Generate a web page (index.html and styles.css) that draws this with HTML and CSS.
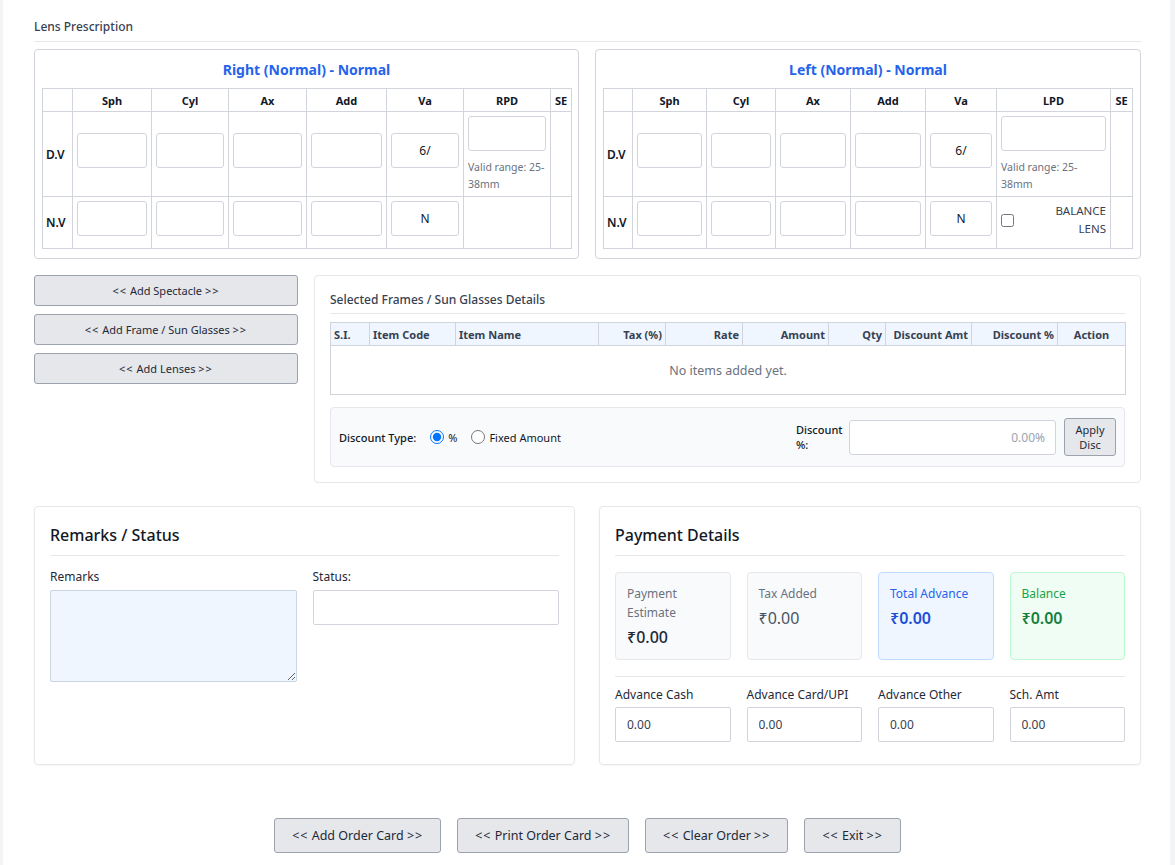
FILE: index.html
```html
<!DOCTYPE html>
<html>
<head>
<meta charset="utf-8">
<link rel="stylesheet" href="styles.css">
</head>
<body>
<div class="page">
  <div class="section-label">Lens Prescription</div>

  <div class="rx-grid">
    <div class="rx-card">
      <div class="rx-title">Right (Normal) - Normal</div>
      <table class="rx-table">
        <colgroup>
          <col style="width:30px"><col style="width:79px"><col style="width:77px"><col style="width:78px"><col style="width:80px"><col style="width:77px"><col style="width:87px"><col style="width:21px">
        </colgroup>
        <tr class="rx-head"><th></th><th>Sph</th><th>Cyl</th><th>Ax</th><th>Add</th><th>Va</th><th>RPD</th><th>SE</th></tr>
        <tr class="rx-dv">
          <td class="rx-lbl">D.V</td>
          <td><input class="rx-in" type="text"></td>
          <td><input class="rx-in" type="text"></td>
          <td><input class="rx-in" type="text"></td>
          <td><input class="rx-in" type="text"></td>
          <td><input class="rx-in center" type="text" value="6/"></td>
          <td class="pd"><input class="rx-in" type="text"><div class="hint">Valid range: 25-38mm</div></td>
          <td></td>
        </tr>
        <tr class="rx-nv">
          <td class="rx-lbl">N.V</td>
          <td><input class="rx-in" type="text"></td>
          <td><input class="rx-in" type="text"></td>
          <td><input class="rx-in" type="text"></td>
          <td><input class="rx-in" type="text"></td>
          <td><input class="rx-in center" type="text" value="N"></td>
          <td></td>
          <td></td>
        </tr>
      </table>
    </div>

    <div class="rx-card">
      <div class="rx-title">Left (Normal) - Normal</div>
      <table class="rx-table">
        <colgroup>
          <col style="width:29px"><col style="width:74px"><col style="width:69px"><col style="width:75px"><col style="width:75px"><col style="width:71px"><col style="width:114px"><col style="width:22px">
        </colgroup>
        <tr class="rx-head"><th></th><th>Sph</th><th>Cyl</th><th>Ax</th><th>Add</th><th>Va</th><th>LPD</th><th>SE</th></tr>
        <tr class="rx-dv">
          <td class="rx-lbl">D.V</td>
          <td><input class="rx-in" type="text"></td>
          <td><input class="rx-in" type="text"></td>
          <td><input class="rx-in" type="text"></td>
          <td><input class="rx-in" type="text"></td>
          <td><input class="rx-in center" type="text" value="6/"></td>
          <td class="pd"><input class="rx-in" type="text"><div class="hint">Valid range: 25-38mm</div></td>
          <td></td>
        </tr>
        <tr class="rx-nv">
          <td class="rx-lbl">N.V</td>
          <td><input class="rx-in" type="text"></td>
          <td><input class="rx-in" type="text"></td>
          <td><input class="rx-in" type="text"></td>
          <td><input class="rx-in" type="text"></td>
          <td><input class="rx-in center" type="text" value="N"></td>
          <td class="balance"><label class="balance-wrap"><input type="checkbox" class="chk"><span class="balance-text">BALANCE LENS</span></label></td>
          <td></td>
        </tr>
      </table>
    </div>
  </div>

  <div class="mid-grid">
    <div class="btn-col">
      <button class="side-btn"><span class="arr">&lt;&lt;</span> Add Spectacle <span class="arr">&gt;&gt;</span></button>
      <button class="side-btn"><span class="arr">&lt;&lt;</span> Add Frame / Sun Glasses <span class="arr">&gt;&gt;</span></button>
      <button class="side-btn"><span class="arr">&lt;&lt;</span> Add Lenses <span class="arr">&gt;&gt;</span></button>
    </div>

    <div class="frames-card">
      <div class="frames-title">Selected Frames / Sun Glasses Details</div>
      <table class="items-table">
        <colgroup>
          <col style="width:39px"><col style="width:86px"><col style="width:143px"><col style="width:67px"><col style="width:77px"><col style="width:86px"><col style="width:57px"><col style="width:86px"><col style="width:86px"><col style="width:68px">
        </colgroup>
        <tr>
          <th class="l">S.I.</th><th class="l">Item Code</th><th class="l">Item Name</th><th class="r">Tax (%)</th><th class="r">Rate</th><th class="r">Amount</th><th class="r">Qty</th><th class="r">Discount Amt</th><th class="r">Discount %</th><th class="c">Action</th>
        </tr>
        <tr><td colspan="10" class="empty">No items added yet.</td></tr>
      </table>

      <div class="disc-box">
        <div class="disc-type">
          <span class="disc-label">Discount Type:</span>
          <label class="radio"><input type="radio" name="dt" checked><span>%</span></label>
          <label class="radio"><input type="radio" name="dt"><span>Fixed Amount</span></label>
        </div>
        <div class="disc-right">
          <span class="disc-pct-label">Discount %:</span>
          <input class="disc-input" type="text" placeholder="0.00%">
          <button class="apply-btn">Apply Disc</button>
        </div>
      </div>
    </div>
  </div>

  <div class="bottom-grid">
    <div class="card">
      <div class="card-title">Remarks / Status</div>
      <div class="remarks-grid">
        <div class="field">
          <label class="field-label">Remarks</label>
          <textarea class="remarks-area"></textarea>
        </div>
        <div class="field">
          <label class="field-label">Status:</label>
          <input class="text-in" type="text">
        </div>
      </div>
    </div>

    <div class="card">
      <div class="card-title">Payment Details</div>
      <div class="sum-grid">
        <div class="sum-box grey">
          <div class="sum-label">Payment Estimate</div>
          <div class="sum-value strong">₹0.00</div>
        </div>
        <div class="sum-box grey">
          <div class="sum-label">Tax Added</div>
          <div class="sum-value">₹0.00</div>
        </div>
        <div class="sum-box blue">
          <div class="sum-label">Total Advance</div>
          <div class="sum-value">₹0.00</div>
        </div>
        <div class="sum-box green">
          <div class="sum-label">Balance</div>
          <div class="sum-value">₹0.00</div>
        </div>
      </div>
      <div class="adv-grid">
        <div class="field">
          <label class="field-label">Advance Cash</label>
          <input class="text-in amt" type="text" value="0.00">
        </div>
        <div class="field">
          <label class="field-label">Advance Card/UPI</label>
          <input class="text-in amt" type="text" value="0.00">
        </div>
        <div class="field">
          <label class="field-label">Advance Other</label>
          <input class="text-in amt" type="text" value="0.00">
        </div>
        <div class="field">
          <label class="field-label">Sch. Amt</label>
          <input class="text-in amt" type="text" value="0.00">
        </div>
      </div>
    </div>
  </div>

  <div class="actions">
    <button class="action-btn"><span class="arr">&lt;&lt;</span> Add Order Card <span class="arr">&gt;&gt;</span></button>
    <button class="action-btn"><span class="arr">&lt;&lt;</span> Print Order Card <span class="arr">&gt;&gt;</span></button>
    <button class="action-btn"><span class="arr">&lt;&lt;</span> Clear Order <span class="arr">&gt;&gt;</span></button>
    <button class="action-btn"><span class="arr">&lt;&lt;</span> Exit <span class="arr">&gt;&gt;</span></button>
  </div>
</div>
</body>
</html>
```

FILE: styles.css
```css
* { box-sizing: border-box; }

html, body {
  margin: 0;
  padding: 0;
}

body {
  background: #f3f4f6;
  font-family: "Noto Sans", "Open Sans", sans-serif;
  color: #1f2937;
  font-size: 12px;
}

.page {
  background: #ffffff;
  margin-left: 3px;
  width: 1167px;
  min-height: 865px;
  padding: 17px 29px 12px 31px;
}

.section-label {
  font-size: 12px;
  font-weight: 500;
  color: #374151;
  line-height: 20px;
  padding-bottom: 4px;
  border-bottom: 1px solid #e5e7eb;
  margin-bottom: 7px;
}

.arr {
  letter-spacing: 1px;
}

/* prescription */
.rx-grid {
  display: grid;
  grid-template-columns: 545px 546px;
  gap: 16px;
}

.rx-card {
  border: 1px solid #d1d5db;
  border-radius: 4px;
  padding: 7px 7px 9px;
}

.rx-title {
  text-align: center;
  color: #2563eb;
  font-weight: 700;
  font-size: 14px;
  line-height: 22px;
  margin-top: 2px;
  margin-bottom: 7px;
}

.rx-table {
  width: 100%;
  border-collapse: collapse;
  table-layout: fixed;
}

.rx-table th,
.rx-table td {
  border: 1px solid #d1d5db;
  padding: 4px;
  vertical-align: middle;
}

.rx-table th {
  font-size: 11px;
  font-weight: 700;
  color: #111827;
  text-align: center;
  height: 23px;
  padding: 0 2px;
}

.rx-lbl {
  font-size: 12px;
  font-weight: 600;
  color: #111827;
  padding: 4px 3px !important;
}

.rx-in {
  display: block;
  width: 100%;
  height: 35px;
  border: 1px solid #d1d5db;
  border-radius: 3px;
  background: #ffffff;
  font-family: inherit;
  font-size: 12px;
  color: #111827;
  padding: 0 6px;
  margin-bottom: 8px;
  outline: none;
}

.rx-in.center { text-align: center; }

.pd { vertical-align: top !important; }

.hint {
  font-size: 10.5px;
  line-height: 16.5px;
  color: #6b7280;
  margin-top: 0;
}

.balance { vertical-align: top !important; padding-top: 5px !important; }

.balance-wrap {
  display: flex;
  align-items: center;
  justify-content: space-between;
}

.chk {
  width: 13px;
  height: 13px;
  margin: 0;
}

.balance-text {
  width: 70px;
  text-align: right;
  font-size: 11.5px;
  line-height: 18px;
  color: #374151;
}

/* middle */
.mid-grid {
  display: grid;
  grid-template-columns: 264px 827px;
  gap: 16px;
  margin-top: 16px;
  align-items: start;
}

.btn-col {
  display: flex;
  flex-direction: column;
  gap: 8px;
}

.side-btn {
  height: 31px;
  background: #e5e7eb;
  border: 1px solid #9ca3af;
  border-radius: 3px;
  font-family: inherit;
  font-size: 11px;
  color: #1f2937;
}

.frames-card {
  border: 1px solid #e5e7eb;
  border-radius: 4px;
  padding: 15px;
}

.frames-title {
  font-size: 12px;
  font-weight: 500;
  color: #374151;
  line-height: 18px;
  padding-bottom: 4px;
  border-bottom: 1px solid #e5e7eb;
  margin-bottom: 8px;
}

.items-table {
  width: 100%;
  border-collapse: collapse;
  table-layout: fixed;
  border: 1px solid #d1d5db;
}

.items-table th {
  background: #eff6ff;
  border: 1px solid #d1d5db;
  height: 23px;
  font-size: 11px;
  font-weight: 700;
  color: #374151;
  padding: 0 3px;
  white-space: nowrap;
}

.items-table th.l { text-align: left; }
.items-table th.r { text-align: right; }
.items-table th.c { text-align: center; }

.empty {
  height: 49px;
  text-align: center;
  color: #6b7280;
  font-size: 12.5px;
}

.disc-box {
  margin-top: 12px;
  height: 60px;
  background: #f8fafc;
  border: 1px solid #e5e7eb;
  border-radius: 4px;
  display: flex;
  align-items: center;
  justify-content: space-between;
  padding: 0 8px;
}

.disc-type {
  display: flex;
  align-items: center;
  font-size: 11px;
  color: #111827;
}

.disc-label {
  font-weight: 500;
  margin-right: 14px;
}

.radio {
  display: flex;
  align-items: center;
  margin-right: 14px;
}

.radio input {
  width: 14px;
  height: 14px;
  margin: 0 4px 0 0;
}

.disc-right {
  display: flex;
  align-items: center;
}

.disc-pct-label {
  width: 48px;
  font-size: 11px;
  font-weight: 500;
  line-height: 15px;
  color: #111827;
  margin-right: 5px;
}

.disc-input {
  width: 207px;
  height: 35px;
  border: 1px solid #d1d5db;
  border-radius: 3px;
  text-align: right;
  padding: 0 10px;
  font-family: inherit;
  font-size: 12px;
  outline: none;
}

.disc-input::placeholder { color: #9ca3af; }

.apply-btn {
  width: 52px;
  height: 38px;
  margin-left: 8px;
  background: #e5e7eb;
  border: 1px solid #9ca3af;
  border-radius: 3px;
  font-family: inherit;
  font-size: 11px;
  line-height: 15px;
  color: #1f2937;
  padding: 0 4px;
}

/* bottom */
.bottom-grid {
  display: grid;
  grid-template-columns: 541px 542px;
  gap: 24px;
  margin-top: 23px;
}

.card {
  border: 1px solid #e5e7eb;
  border-radius: 4px;
  padding: 15px 15px 22px;
  box-shadow: 0 1px 2px rgba(0,0,0,0.04);
}

.card-title {
  font-size: 16px;
  font-weight: 500;
  color: #111827;
  line-height: 26px;
  padding-bottom: 7px;
  border-bottom: 1px solid #e5e7eb;
  margin-bottom: 12px;
}

.remarks-grid {
  display: grid;
  grid-template-columns: 1fr 1fr;
  gap: 16px;
  align-items: start;
}

.field {
  display: flex;
  flex-direction: column;
}

.field-label {
  font-size: 12px;
  line-height: 17px;
  color: #1f2937;
  margin-bottom: 5px;
}

.remarks-area {
  height: 92px;
  background: #eff6ff;
  border: 1px solid #cbd5e1;
  border-radius: 2px;
  resize: both;
  font-family: inherit;
  outline: none;
}

.text-in {
  height: 35px;
  border: 1px solid #d1d5db;
  border-radius: 2px;
  background: #ffffff;
  font-family: inherit;
  font-size: 12px;
  color: #374151;
  padding: 0 11px;
  outline: none;
  width: 100%;
}

.sum-grid {
  display: grid;
  grid-template-columns: repeat(4, 1fr);
  gap: 16px;
  margin-top: 16px;
  padding-bottom: 16px;
  border-bottom: 1px solid #e5e7eb;
}

.sum-box {
  height: 88px;
  border: 1px solid #e5e7eb;
  border-radius: 4px;
  padding: 11px 11px;
}

.sum-box.grey { background: #f8fafc; }
.sum-box.blue { background: #eff6ff; border-color: #bfdbfe; }
.sum-box.green { background: #f0fdf4; border-color: #bbf7d0; }

.sum-label {
  font-size: 12px;
  line-height: 19px;
  color: #6b7280;
}

.sum-value {
  font-size: 16px;
  line-height: 20px;
  margin-top: 5px;
  color: #4b5563;
}

.sum-value.strong { color: #1f2937; font-weight: 500; }

.blue .sum-label { color: #2563eb; }
.blue .sum-value { color: #1d4ed8; font-weight: 600; }
.green .sum-label { color: #16a34a; }
.green .sum-value { color: #15803d; font-weight: 600; }

.adv-grid {
  display: grid;
  grid-template-columns: repeat(4, 1fr);
  gap: 16px;
  margin-top: 9px;
}

.adv-grid .field-label { margin-bottom: 4px; }

/* actions */
.actions {
  display: flex;
  justify-content: center;
  gap: 16px;
  margin-top: 53px;
}

.action-btn {
  height: 35px;
  padding: 0 17px;
  background: #e5e7eb;
  border: 1px solid #9ca3af;
  border-radius: 3px;
  font-family: inherit;
  font-size: 12.5px;
  color: #1f2937;
}
```
